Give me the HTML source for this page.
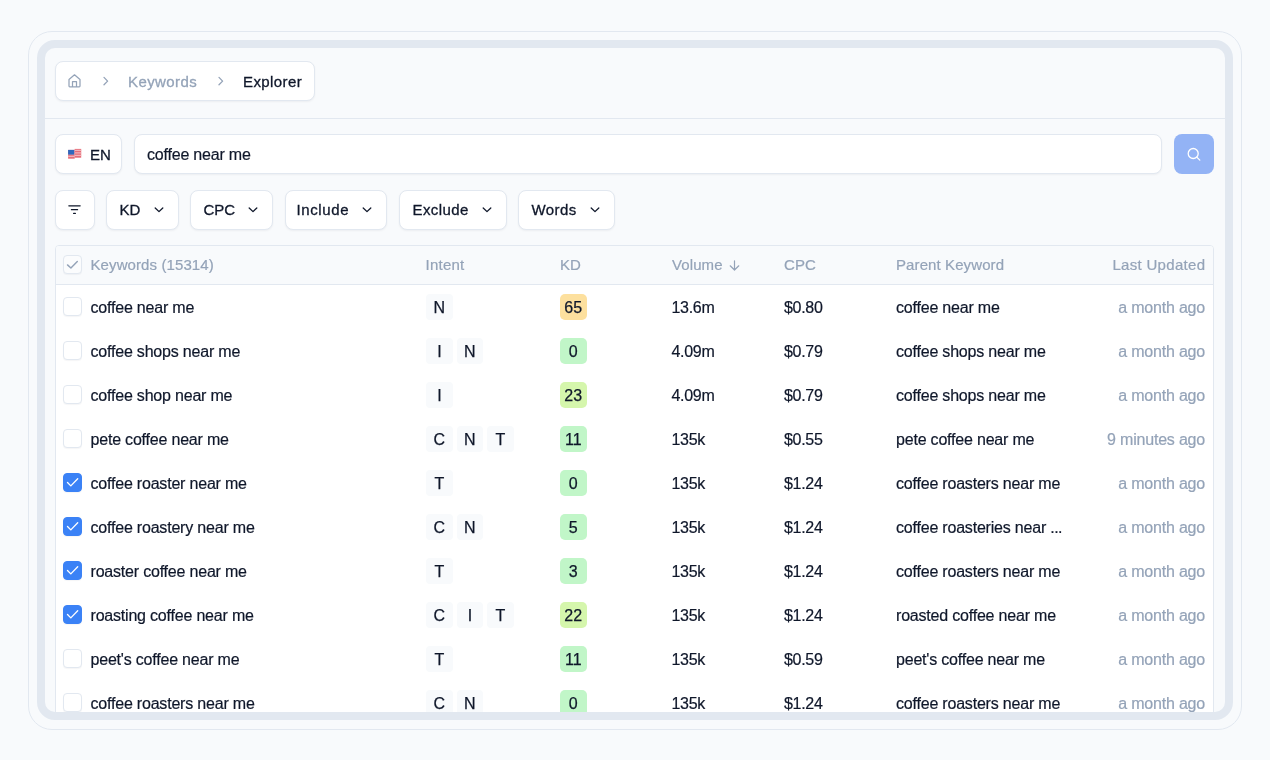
<!DOCTYPE html>
<html><head><meta charset="utf-8">
<style>
*{box-sizing:border-box;margin:0;padding:0}
html,body{width:1270px;height:760px;overflow:hidden;background:#f8fafc;font-family:"Liberation Sans",sans-serif;color:#0f172a}
.abs{position:absolute}
.wrap{position:absolute;left:0;top:0;width:1270px;height:760px;will-change:transform}
.wrap span{-webkit-text-stroke:0.2px currentColor}
.wrap span.med{-webkit-text-stroke:0.3px currentColor}
.outer{position:absolute;left:28px;top:31px;width:1214px;height:699px;border:1px solid #e2e8f0;border-radius:24px}
.frame{position:absolute;left:37px;top:40px;width:1196px;height:680px;border:8px solid #e2e8f0;border-radius:18px}
.framebg{position:absolute;left:40px;top:43px;width:1190px;height:674px;border-radius:14px;background:#f8fafc}
.clip{position:absolute;left:0;top:0;width:1270px;height:712px;overflow:hidden}
.sep{position:absolute;left:45px;top:118px;width:1180px;height:1px;background:#e2e8f0}
.box{position:absolute;background:#fff;border:1px solid #e2e8f0;border-radius:8px;box-shadow:0 1px 2px rgba(15,23,42,0.05)}
.crumb{left:55px;top:61px;width:260px;height:40px}
.t16{font-size:15px;letter-spacing:0.42px;line-height:20px;position:absolute;white-space:nowrap}
.en{left:55px;top:134px;width:67px;height:40px}
.search{left:134px;top:134px;width:1028px;height:40px}
.sbtn{position:absolute;left:1174px;top:134px;width:40px;height:40px;border-radius:8px;background:#93b3f5}
.btn{position:absolute;top:190px;height:40px;background:#fff;border:1px solid #e2e8f0;border-radius:8px;box-shadow:0 1px 2px rgba(15,23,42,0.05)}
.bt{position:absolute;left:12.5px;top:9px;font-size:15px;letter-spacing:0.42px;line-height:20px;white-space:nowrap}
.chev{position:absolute;right:14px;top:16px}
.fbtn{left:55px;width:40px}
.table{position:absolute;left:55px;top:245px;width:1159px;height:520px;background:#fff;border:1px solid #e2e8f0;border-radius:4px;overflow:hidden}
.thead{position:absolute;left:0;top:0;width:100%;height:39px;background:#f8fafc;border-bottom:1px solid #e2e8f0}
.th{position:absolute;top:10px;font-size:15px;letter-spacing:0.1px;line-height:18px;color:#94a3b8;white-space:nowrap}
.row{position:absolute;left:0;width:100%;height:44px}
.cb{position:absolute;left:7px;top:12px;width:19px;height:19px;border:1px solid #e2e8f0;border-radius:4px;background:#fff;box-shadow:0 1px 1px rgba(15,23,42,0.04)}
.cb.on{background:#3b82f6;border-color:#3b82f6}
.cb.on svg{position:absolute;left:-1px;top:-1px}
.hcb{position:absolute;left:7px;top:9px;width:19px;height:19px;border:1px solid #e2e8f0;border-radius:4px;background:#fbfcfd;box-shadow:0 1px 1px rgba(15,23,42,0.04)}
.hcb svg{position:absolute;left:-1px;top:-1px}
.c{position:absolute;top:14px;font-size:16px;letter-spacing:-0.2px;line-height:18px;white-space:nowrap}
.kw{left:34.5px}
.intent{left:370px;top:8.75px;height:26.5px;display:flex;gap:4px}
.wrap .ib{display:inline-block;width:26.5px;height:26.5px;border-radius:4px;background:#f8fafc;text-align:center;font-size:16px;line-height:28px;-webkit-text-stroke:0.25px currentColor}
.wrap .kd{position:absolute;left:504px;top:8.75px;width:26.5px;height:26.5px;border-radius:5px;text-align:center;font-size:16px;line-height:28px;-webkit-text-stroke:0.25px currentColor}
.kd.amber{background:#fde09e}
.kd.green{background:#c1f6c8}
.kd.lime{background:#d5f6ac}
.vol{left:615.5px;letter-spacing:-0.3px}
.cpc{left:728px;letter-spacing:-0.3px}
.par{left:840px}
.upd{right:8px;color:#94a3b8}
</style></head><body>
<div class="wrap">
<div class="outer"></div>
<div class="framebg"></div>
<div class="sep"></div>

<div class="box crumb">
  <svg class="abs" style="left:11px;top:11px" width="16" height="16" viewBox="0 0 16 16"><path d="M2.0 13.1 V6.5 L7.5 1.8 L13.0 6.5 V13.1 Q13.0 13.9 12.2 13.9 H2.8 Q2.0 13.9 2.0 13.1 Z M5.5 13.9 V8.7 H9.5 V13.9" fill="none" stroke="#94a3b8" stroke-width="1.25" stroke-linejoin="round"/></svg>
  <svg class="abs" style="left:46px;top:14px" width="8" height="12" viewBox="0 0 8 12"><path d="M2 1.4 L5.6 5.1 L2 8.8" fill="none" stroke="#94a3b8" stroke-width="1.3" stroke-linecap="round" stroke-linejoin="round"/></svg>
  <span class="t16 med" style="left:72px;top:10px;color:#94a3b8">Keywords</span>
  <svg class="abs" style="left:161px;top:14px" width="8" height="12" viewBox="0 0 8 12"><path d="M2 1.4 L5.6 5.1 L2 8.8" fill="none" stroke="#94a3b8" stroke-width="1.3" stroke-linecap="round" stroke-linejoin="round"/></svg>
  <span class="t16 med" style="left:187px;top:10px;color:#0f172a">Explorer</span>
</div>

<div class="box en">
  <svg class="abs" style="left:12px;top:13px" width="15" height="12" viewBox="0 0 15 12">
    <rect x="0.1" y="1.9" width="6.6" height="8.8" fill="#e66d78"/>
    <rect x="6.6" y="0.9" width="6.6" height="8.8" fill="#e66d78"/>
    <path d="M0.1 3.2 H6.6 M0.1 5.9 H6.6 M0.1 8.4 H6.6" stroke="#f3b3b9" stroke-width="1.1"/>
    <path d="M6.6 2.4 H13.2 M6.6 4.9 H13.2 M6.6 7.4 H13.2" stroke="#f3b3b9" stroke-width="1.1"/>
    <rect x="0.1" y="1.9" width="6.1" height="4.7" fill="#2f68bd"/>
  </svg>
  <span class="t16 med" style="left:34px;top:9.5px;font-size:15px;letter-spacing:0">EN</span>
</div>

<div class="box search">
  <span class="t16" style="left:12px;top:10px;font-size:16px;letter-spacing:-0.2px">coffee near me</span>
</div>
<div class="sbtn">
  <svg class="abs" style="left:12px;top:12px" width="16" height="16" viewBox="0 0 16 16"><circle cx="7.2" cy="7.5" r="5" fill="none" stroke="#fff" stroke-width="1.3"/><path d="M10.8 11.1 L13.8 14.1" stroke="#fff" stroke-width="1.3" stroke-linecap="round"/></svg>
</div>

<div class="btn fbtn">
  <svg class="abs" style="left:12px;top:14px" width="16" height="12" viewBox="0 0 16 12"><path d="M0.85 0.8 H12.15 M3.45 4.7 H9.55 M5.65 8.4 H7.35" stroke="#0f172a" stroke-width="1.3" stroke-linecap="round"/></svg>
</div>
<div class="btn" style="left:106px;width:73px"><span class="bt med" style="letter-spacing:0">KD</span><svg class="chev" width="10" height="6" viewBox="0 0 10 6"><path d="M1.2 1.0 L5 4.6 L8.8 1.0" fill="none" stroke="#0f172a" stroke-width="1.3" stroke-linecap="round" stroke-linejoin="round"/></svg></div><div class="btn" style="left:190px;width:83px"><span class="bt med" style="letter-spacing:0">CPC</span><svg class="chev" width="10" height="6" viewBox="0 0 10 6"><path d="M1.2 1.0 L5 4.6 L8.8 1.0" fill="none" stroke="#0f172a" stroke-width="1.3" stroke-linecap="round" stroke-linejoin="round"/></svg></div><div class="btn" style="left:284.5px;width:102.5px"><span class="bt med" style="left:11px;letter-spacing:0.6px">Include</span><svg class="chev" width="10" height="6" viewBox="0 0 10 6"><path d="M1.2 1.0 L5 4.6 L8.8 1.0" fill="none" stroke="#0f172a" stroke-width="1.3" stroke-linecap="round" stroke-linejoin="round"/></svg></div><div class="btn" style="left:399px;width:108px"><span class="bt med" style="">Exclude</span><svg class="chev" width="10" height="6" viewBox="0 0 10 6"><path d="M1.2 1.0 L5 4.6 L8.8 1.0" fill="none" stroke="#0f172a" stroke-width="1.3" stroke-linecap="round" stroke-linejoin="round"/></svg></div><div class="btn" style="left:518px;width:97px"><span class="bt med" style="">Words</span><svg class="chev" width="10" height="6" viewBox="0 0 10 6"><path d="M1.2 1.0 L5 4.6 L8.8 1.0" fill="none" stroke="#0f172a" stroke-width="1.3" stroke-linecap="round" stroke-linejoin="round"/></svg></div>

<div class="clip"><div class="table">
  <div class="thead">
    <div class="hcb"><svg width="19" height="19" viewBox="0 0 19 19"><path d="M4.5 9.9 L7.9 13 L14.3 6.5" fill="none" stroke="#94a3b8" stroke-width="1.45" stroke-linecap="round" stroke-linejoin="round"/></svg></div>
    <span class="th" style="left:34.5px">Keywords (15314)</span>
    <span class="th" style="left:369.5px;letter-spacing:0.25px">Intent</span>
    <span class="th" style="left:504px">KD</span>
    <span class="th" style="left:616px">Volume <svg style="vertical-align:-0.5px;margin-left:2px" width="11" height="11" viewBox="0 0 11 11"><path d="M5.5 0.8 V10 M1.2 5.8 L5.5 10 L9.8 5.8" fill="none" stroke="#94a3b8" stroke-width="1.2" stroke-linecap="round" stroke-linejoin="round"/></svg></span>
    <span class="th" style="left:728px">CPC</span>
    <span class="th" style="left:840px">Parent Keyword</span>
    <span class="th" style="right:7.7px;letter-spacing:0.3px">Last Updated</span>
  </div>
  <div class="row" style="top:39px"><div class="cb"></div><span class="c kw">coffee near me</span><span class="c intent"><span class="ib">N</span></span><span class="kd amber">65</span><span class="c vol">13.6m</span><span class="c cpc">$0.80</span><span class="c par">coffee near me</span><span class="c upd">a month ago</span></div><div class="row" style="top:83px"><div class="cb"></div><span class="c kw">coffee shops near me</span><span class="c intent"><span class="ib">I</span><span class="ib">N</span></span><span class="kd green">0</span><span class="c vol">4.09m</span><span class="c cpc">$0.79</span><span class="c par">coffee shops near me</span><span class="c upd">a month ago</span></div><div class="row" style="top:127px"><div class="cb"></div><span class="c kw">coffee shop near me</span><span class="c intent"><span class="ib">I</span></span><span class="kd lime">23</span><span class="c vol">4.09m</span><span class="c cpc">$0.79</span><span class="c par">coffee shops near me</span><span class="c upd">a month ago</span></div><div class="row" style="top:171px"><div class="cb"></div><span class="c kw">pete coffee near me</span><span class="c intent"><span class="ib">C</span><span class="ib">N</span><span class="ib">T</span></span><span class="kd green">11</span><span class="c vol">135k</span><span class="c cpc">$0.55</span><span class="c par">pete coffee near me</span><span class="c upd">9 minutes ago</span></div><div class="row" style="top:215px"><div class="cb on"><svg width="19" height="19" viewBox="0 0 19 19"><path d="M4.5 9.5 L7.8 12.9 L14.7 5.8" fill="none" stroke="#fff" stroke-width="1.35" stroke-linecap="round" stroke-linejoin="round"/></svg></div><span class="c kw">coffee roaster near me</span><span class="c intent"><span class="ib">T</span></span><span class="kd green">0</span><span class="c vol">135k</span><span class="c cpc">$1.24</span><span class="c par">coffee roasters near me</span><span class="c upd">a month ago</span></div><div class="row" style="top:259px"><div class="cb on"><svg width="19" height="19" viewBox="0 0 19 19"><path d="M4.5 9.5 L7.8 12.9 L14.7 5.8" fill="none" stroke="#fff" stroke-width="1.35" stroke-linecap="round" stroke-linejoin="round"/></svg></div><span class="c kw">coffee roastery near me</span><span class="c intent"><span class="ib">C</span><span class="ib">N</span></span><span class="kd green">5</span><span class="c vol">135k</span><span class="c cpc">$1.24</span><span class="c par">coffee roasteries near <span style='letter-spacing:-0.6px'>...</span></span><span class="c upd">a month ago</span></div><div class="row" style="top:303px"><div class="cb on"><svg width="19" height="19" viewBox="0 0 19 19"><path d="M4.5 9.5 L7.8 12.9 L14.7 5.8" fill="none" stroke="#fff" stroke-width="1.35" stroke-linecap="round" stroke-linejoin="round"/></svg></div><span class="c kw">roaster coffee near me</span><span class="c intent"><span class="ib">T</span></span><span class="kd green">3</span><span class="c vol">135k</span><span class="c cpc">$1.24</span><span class="c par">coffee roasters near me</span><span class="c upd">a month ago</span></div><div class="row" style="top:347px"><div class="cb on"><svg width="19" height="19" viewBox="0 0 19 19"><path d="M4.5 9.5 L7.8 12.9 L14.7 5.8" fill="none" stroke="#fff" stroke-width="1.35" stroke-linecap="round" stroke-linejoin="round"/></svg></div><span class="c kw">roasting coffee near me</span><span class="c intent"><span class="ib">C</span><span class="ib">I</span><span class="ib">T</span></span><span class="kd lime">22</span><span class="c vol">135k</span><span class="c cpc">$1.24</span><span class="c par">roasted coffee near me</span><span class="c upd">a month ago</span></div><div class="row" style="top:391px"><div class="cb"></div><span class="c kw">peet's coffee near me</span><span class="c intent"><span class="ib">T</span></span><span class="kd green">11</span><span class="c vol">135k</span><span class="c cpc">$0.59</span><span class="c par">peet's coffee near me</span><span class="c upd">a month ago</span></div><div class="row" style="top:435px"><div class="cb"></div><span class="c kw">coffee roasters near me</span><span class="c intent"><span class="ib">C</span><span class="ib">N</span></span><span class="kd green">0</span><span class="c vol">135k</span><span class="c cpc">$1.24</span><span class="c par">coffee roasters near me</span><span class="c upd">a month ago</span></div>
</div></div>
<div class="frame"></div>
</div>
</body></html>
